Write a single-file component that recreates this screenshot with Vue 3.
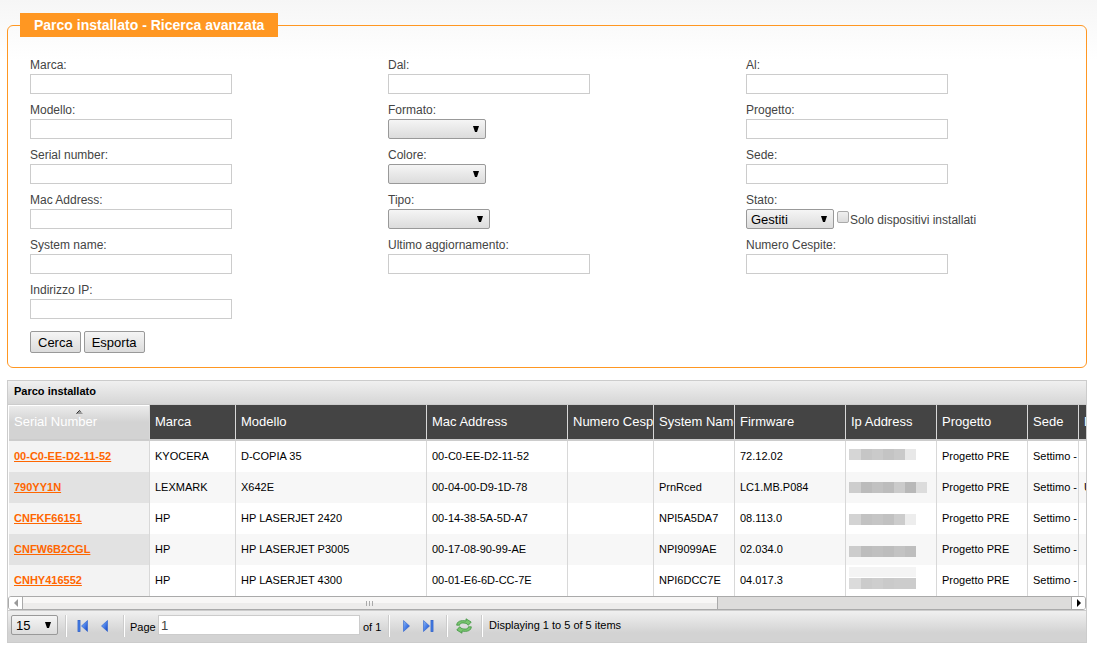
<script setup>
import { ref } from 'vue'

const fields = [
  { id: 'marca', label: 'Marca:' },
  { id: 'dal', label: 'Dal:' },
  { id: 'al', label: 'Al:' },
  { id: 'modello', label: 'Modello:' },
  { id: 'formato', label: 'Formato:', type: 'select', size: 'medium' },
  { id: 'progetto', label: 'Progetto:' },
  { id: 'serial', label: 'Serial number:' },
  { id: 'colore', label: 'Colore:', type: 'select', size: 'medium' },
  { id: 'sede', label: 'Sede:' },
  { id: 'mac', label: 'Mac Address:' },
  { id: 'tipo', label: 'Tipo:', type: 'select', size: 'large' },
  { id: 'stato', label: 'Stato:', type: 'select', size: 'small', option: 'Gestiti', check: true },
  { id: 'system', label: 'System name:' },
  { id: 'aggiornamento', label: 'Ultimo aggiornamento:' },
  { id: 'cespite', label: 'Numero Cespite:' },
  { id: 'ip', label: 'Indirizzo IP:' },
]

const columns = [
  { name: 'Serial Number', width: 141 },
  { name: 'Marca', width: 86 },
  { name: 'Modello', width: 191 },
  { name: 'Mac Address', width: 141 },
  { name: 'Numero Cespite', width: 86 },
  { name: 'System Name', width: 81 },
  { name: 'Firmware', width: 111 },
  { name: 'Ip Address', width: 91 },
  { name: 'Progetto', width: 91 },
  { name: 'Sede', width: 51 },
  { name: 'D', width: 91 },
]

const rows = [
  {
    serial: '00-C0-EE-D2-11-52',
    cells: ['KYOCERA', 'D-COPIA 35', '00-C0-EE-D2-11-52', '', '', '72.12.02'],
    top: 8, mask: ['#d6d6d6', '#c6c6c6', '#cacaca', '#c4c4c4', '#c9c9c9', '#e8e8e8'], last: '',
  },
  {
    serial: '790YY1N',
    cells: ['LEXMARK', 'X642E', '00-04-00-D9-1D-78', '', 'PrnRced', 'LC1.MB.P084'],
    top: 10, mask: ['#cdcdcd', '#bbbbbb', '#c1c1c1', '#bcbcbc', '#cbcbcb', '#b8b8b8', '#dcdcdc'], last: 'U',
  },
  {
    serial: 'CNFKF66151',
    cells: ['HP', 'HP LASERJET 2420', '00-14-38-5A-5D-A7', '', 'NPI5A5DA7', '08.113.0'],
    top: 11, mask: ['#d3d3d3', '#c2c2c2', '#c5c5c5', '#c1c1c1', '#cccccc', '#ededed'], last: '',
  },
  {
    serial: 'CNFW6B2CGL',
    cells: ['HP', 'HP LASERJET P3005', '00-17-08-90-99-AE', '', 'NPI9099AE', '02.034.0'],
    top: 12, mask: ['#cccccc', '#bdbdbd', '#c0c0c0', '#bdbdbd', '#c3c3c3', '#bebebe'], last: '',
  },
  {
    serial: 'CNHY416552',
    cells: ['HP', 'HP LASERJET 4300', '00-01-E6-6D-CC-7E', '', 'NPI6DCC7E', '04.017.3'],
    top: 13, mask: ['#dbdbdb', '#cbcbcb', '#cecece', '#cacaca', '#cccccc', '#cccccc'], last: '', haze: true,
  },
]

const page = ref('1')
</script>

<template>
  <main class="page">
    <form @submit.prevent>
      <fieldset class="search">
        <legend>Parco installato - Ricerca avanzata</legend>
        <div class="fields">
          <div v-for="f in fields" :key="f.id" class="field">
            <label :for="f.id">{{ f.label }}</label>
            <div class="control">
              <span v-if="f.type === 'select'" class="select" :class="f.size">
                <select :id="f.id"><option>{{ f.option }}</option></select>
                <svg class="arrow" viewBox="0 0 6 6" aria-hidden="true"><path d="M0 0H6L4 6H2Z" /></svg>
              </span>
              <input v-else :id="f.id" class="text" type="text">
              <label v-if="f.check" class="check"><input type="checkbox"><span>Solo dispositivi installati</span></label>
            </div>
          </div>
        </div>
        <div class="actions">
          <button type="submit">Cerca</button>
          <button type="button">Esporta</button>
        </div>
      </fieldset>
    </form>

    <section class="grid">
      <h2>Parco installato</h2>
      <div class="viewport">
        <table>
          <colgroup><col v-for="c in columns" :key="c.name" :style="{ width: c.width + 'px' }"></colgroup>
          <thead>
            <tr>
              <th v-for="(c, i) in columns" :key="c.name" :class="{ sorted: i === 0 }">
                {{ c.name }}
                <svg v-if="i === 0" class="sort" viewBox="0 0 7 4" aria-hidden="true"><path d="M0 4L3.5 0L7 4Z" fill="#999" /><path d="M0.5 3.5L3.5 0.5L4.5 1.5" fill="none" stroke="#333" /></svg>
              </th>
            </tr>
          </thead>
          <tbody>
            <tr v-for="r in rows" :key="r.serial">
              <td class="sorted"><a href="#">{{ r.serial }}</a></td>
              <td v-for="(c, i) in r.cells" :key="i">{{ c }}</td>
              <td class="masked">
                <svg width="78" height="31" viewBox="0 0 78 31" shape-rendering="crispEdges" aria-hidden="true">
                  <rect v-if="r.haze" x="0" y="2" width="67" height="10" fill="#f4f4f4" />
                  <rect v-for="(m, i) in r.mask" :key="i" :x="i === 0 ? 0 : 1 + i * 11" :y="r.top" :width="i === 0 ? 12 : 11" height="11" :fill="m" />
                </svg>
              </td>
              <td>Progetto PRE</td>
              <td>Settimo - </td>
              <td>{{ r.last }}</td>
            </tr>
          </tbody>
        </table>
      </div>
      <div class="scrollbar">
        <button type="button" class="step left" aria-label="Scorri a sinistra"><svg viewBox="0 0 4 8"><path d="M4 0V8L0 4Z" fill="#999" /></svg></button>
        <div class="track"><div class="thumb"><i></i><i></i><i></i></div></div>
        <button type="button" class="step right" aria-label="Scorri a destra"><svg viewBox="0 0 4 8"><path d="M0 0V8L4 4Z" /></svg></button>
      </div>
      <div class="pager">
        <span class="select rows">
          <select aria-label="Righe per pagina"><option>15</option></select>
          <svg class="arrow" viewBox="0 0 6 6" aria-hidden="true"><path d="M0 0H6L4 6H2Z" /></svg>
        </span>
        <div class="group prev">
          <button type="button" class="icon" aria-label="Prima pagina">
            <svg width="12" height="12" viewBox="0 0 12 12"><defs><linearGradient id="blue" x1="0" y1="0" x2="1" y2="1"><stop offset="0" stop-color="#8db8f4" /><stop offset="0.5" stop-color="#4a80e8" /><stop offset="1" stop-color="#123fc0" /></linearGradient></defs><rect x="1" y="0.5" width="2" height="11" fill="#4a80e8" stroke="#2c5fc8" stroke-width="0.8" /><path d="M10.5 0.5V11.5L4.5 6Z" fill="url(#blue)" stroke="#2b61ce" stroke-width="0.6" /></svg>
          </button>
          <button type="button" class="icon" aria-label="Pagina precedente">
            <svg width="12" height="12" viewBox="0 0 12 12"><path d="M8.5 0.5V11.5L2.5 6Z" fill="url(#blue)" stroke="#2b61ce" stroke-width="0.6" /></svg>
          </button>
        </div>
        <div class="group goto">
          <label for="page">Page</label>
          <input id="page" v-model="page" type="text">
          <span>of 1</span>
        </div>
        <div class="group next">
          <button type="button" class="icon" aria-label="Pagina successiva">
            <svg width="12" height="12" viewBox="0 0 12 12"><path d="M3.5 0.5V11.5L9.5 6Z" fill="url(#blue)" stroke="#2b61ce" stroke-width="0.6" /></svg>
          </button>
          <button type="button" class="icon" aria-label="Ultima pagina">
            <svg width="12" height="12" viewBox="0 0 12 12"><path d="M1.5 0.5V11.5L7.5 6Z" fill="url(#blue)" stroke="#2b61ce" stroke-width="0.6" /><rect x="9" y="0.5" width="2" height="11" fill="#4a80e8" stroke="#2c5fc8" stroke-width="0.8" /></svg>
          </button>
        </div>
        <div class="group reload">
          <button type="button" class="icon" aria-label="Aggiorna">
            <svg width="16" height="16" viewBox="0 0 16 16"><g fill="#79c46f" stroke="#3f9440" stroke-width="0.8" stroke-linejoin="round"><path d="M0.7 7.2C0.8 3.6 4.5 1.8 10 3L10 0.8L15.2 4L12.3 7.3L11 5.8C7 4.4 4 4.6 3.6 7.2Z" /><path d="M15.3 8.8C15.2 12.4 11.5 14.2 6 13L6 15.2L0.8 12L3.7 8.7L5 10.2C9 11.6 12 11.4 12.4 8.8Z" /></g></svg>
          </button>
        </div>
        <div class="group info">Displaying 1 to 5 of 5 items</div>
      </div>
    </section>
  </main>
</template>

<style>
body {
  background: #fff linear-gradient(#f6f6f6, #fff 60px) no-repeat;
}
</style>

<style scoped>
.page {
  padding: 13px 10px 8px 7px;
  font-family: "Liberation Sans", Arial, sans-serif;
  font-size: 11px;
  color: #000;
}
*, *::before, *::after {
  box-sizing: border-box;
}
input, select, button {
  margin: 0;
  font-family: inherit;
}
.search {
  margin: 0;
  padding: 20px 4px 14px 0;
  border: 1px solid #ff9722;
  border-radius: 6px;
  color: #444;
}
legend {
  margin-left: 12px;
  padding: 0 14px;
  background: #ff9722;
  color: #fff;
  font-size: 14px;
  font-weight: bold;
  line-height: 24px;
}
.fields {
  display: grid;
  grid-template-columns: repeat(3, 1fr);
  row-gap: 8px;
}
.field {
  padding-left: 22px;
  font-size: 12px;
}
.field > label {
  display: block;
  line-height: 17px;
}
.control {
  display: flex;
  height: 20px;
}
.text {
  width: 202px;
  height: 20px;
  padding: 0 2px;
  border: 1px solid #ccc;
  background: #fff;
}
.select {
  position: relative;
  display: block;
  height: 20px;
}
.select.medium { width: 98px; }
.select.large { width: 102px; }
.select.small { width: 88px; }
.select.rows { width: 47px; }
.select select {
  appearance: none;
  width: 100%;
  height: 100%;
  padding: 0 4px;
  border: 1px solid #999;
  border-radius: 2px;
  background: linear-gradient(#f5f5f5, #dcdcdc);
  color: #000;
  font-size: 13px;
}
.arrow {
  position: absolute;
  top: 7px;
  right: 7px;
  width: 6px;
  height: 6px;
  pointer-events: none;
}
.check {
  display: flex;
  margin-left: 3px;
  line-height: 22px;
}
.check input {
  appearance: none;
  width: 12px;
  height: 12px;
  margin: 2px 1px 0 0;
  border: 1px solid #aaa;
  border-radius: 2px;
  background: linear-gradient(#f0f0f0, #dcdcdc);
}
.actions {
  display: flex;
  gap: 3px;
  padding: 12px 0 0 22px;
}
.actions button {
  height: 22px;
  padding: 0 7px;
  border: 1px solid #999;
  border-radius: 2px;
  background: linear-gradient(#f5f5f5, #dcdcdc);
  color: #000;
  font-size: 13px;
}
.grid {
  margin-top: 12px;
  border: 1px solid #ccc;
  background: #fff;
}
h2 {
  margin: 0;
  padding-left: 6px;
  border-bottom: 1px solid #ccc;
  background: linear-gradient(#f0f0f0, #d6d6d6);
  font-size: 11px;
  line-height: 21px;
  height: 24px;
}
.viewport {
  padding-left: 1px;
  overflow: hidden;
}
table {
  width: 1161px;
  table-layout: fixed;
  border-collapse: separate;
  border-spacing: 0;
}
th, td {
  padding: 0 0 2px 5px;
  border-right: 1px solid #d8d8d8;
  overflow: hidden;
  white-space: nowrap;
  text-align: left;
}
th {
  position: relative;
  height: 36px;
  border-bottom: 2px solid #ccc;
  background: #444;
  color: #fff;
  font-size: 13px;
  font-weight: normal;
}
th.sorted {
  background: linear-gradient(#ededed, #d3d3d3 50%);
  box-shadow: inset 0 1px #fff;
}
.sort {
  position: absolute;
  top: 5px;
  left: 67px;
  width: 7px;
  height: 4px;
}
td {
  height: 31px;
  font-size: 11px;
}
tbody tr:nth-child(even) td { background: #f7f7f7; }
tbody td.sorted { background: #f3f3f3; }
tbody tr:nth-child(even) td.sorted { background: #e2e2e2; }
td a {
  color: #ff6600;
  font-weight: bold;
}
td.masked {
  padding: 0 0 0 3px;
}
.masked svg {
  display: block;
}
.scrollbar {
  display: flex;
  height: 14px;
  border: 1px solid #aaa;
  border-radius: 3px;
  background: #fff;
  overflow: hidden;
}
.step {
  display: flex;
  align-items: center;
  justify-content: center;
  width: 14px;
  padding: 0;
  border: 0;
  background: #fff;
}
.step svg {
  width: 4px;
  height: 8px;
}
.step.left { border-right: 1px solid #aaa; }
.step.right { border-left: 1px solid #aaa; }
.track {
  flex: 1;
  background: #dddcdb;
}
.thumb {
  display: flex;
  align-items: center;
  justify-content: center;
  gap: 2px;
  width: 66.3%;
  height: 12px;
  border-right: 1px solid #aaa;
  background: linear-gradient(#f8f7f6 50%, #edeceb 50%);
}
.thumb i {
  width: 1px;
  height: 5px;
  background: #aaa;
}
.pager {
  display: flex;
  height: 32px;
  padding: 4px 3px;
  border-top: 1px solid #ccc;
  background: linear-gradient(#f0f0f0, #d3d3d3 70%);
}
.group {
  display: flex;
  height: 22px;
  border-left: 1px solid #ccc;
  box-shadow: inset 1px 0 #fff;
}
.pager .rows { margin-right: 7px; }
.prev { width: 58px; padding-left: 11px; gap: 10px; }
.goto { width: 265px; padding-left: 6px; }
.goto label, .goto span { line-height: 24px; }
.goto label { width: 28px; }
.goto input {
  width: 202px;
  height: 20px;
  margin-right: 3px;
  padding: 0 2px;
  border: 1px solid #ccc;
  background: #fff;
  color: #444;
  font-size: 13px;
}
.next { width: 58px; padding-left: 11px; gap: 10px; }
.reload { width: 35px; padding-left: 9px; }
.info { padding-left: 7px; line-height: 20px; }
.icon {
  display: flex;
  align-items: center;
  padding: 0;
  border: 0;
  background: none;
}
</style>
